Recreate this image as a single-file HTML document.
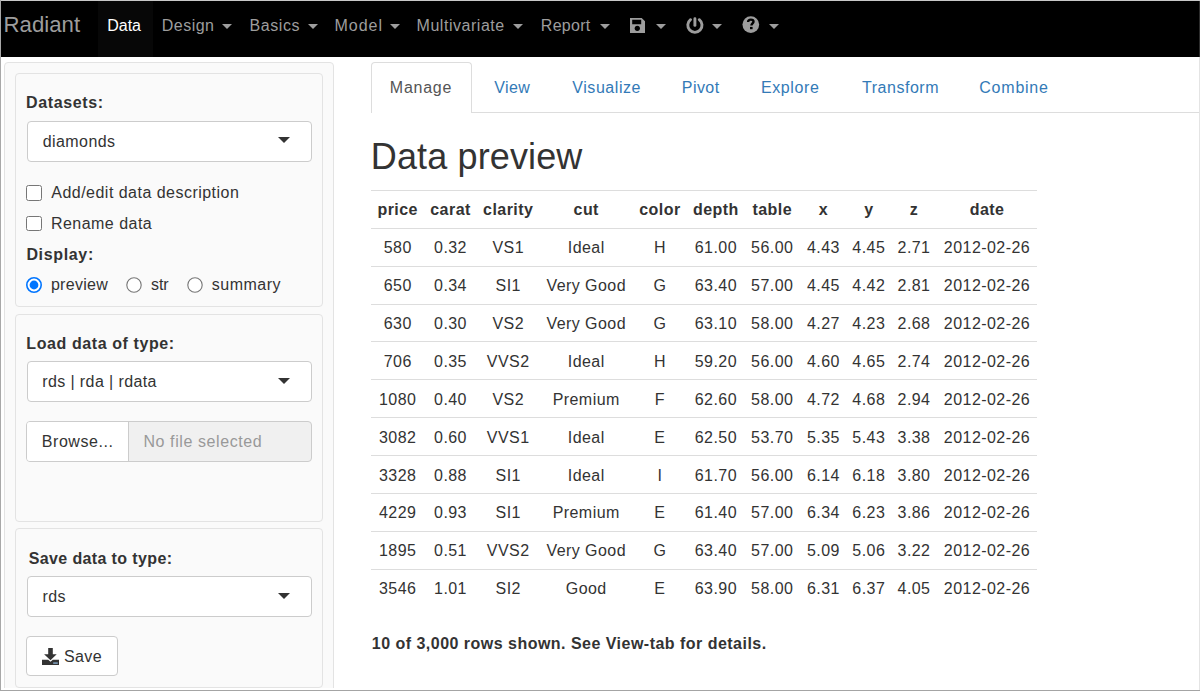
<!DOCTYPE html>
<html><head><meta charset="utf-8">
<style>
html,body{margin:0;padding:0}
body{width:1200px;height:691px;position:relative;overflow:hidden;background:#fff;font-family:"Liberation Sans",sans-serif;color:#333}
.a{position:absolute}
.t{position:absolute;white-space:nowrap;font-size:16px;line-height:20px}
.caret{position:absolute;width:0;height:0;border-top:5px solid #9d9d9d;border-left:5px solid transparent;border-right:5px solid transparent}
.dcaret{position:absolute;width:0;height:0;border-top:6px solid #333;border-left:6px solid transparent;border-right:6px solid transparent}
.sel{position:absolute;left:26.5px;width:283px;height:39px;background:#fff;border:1px solid #ccc;border-radius:4px}
.panel{position:absolute;left:15px;width:306px;background:#fafafa;border:1px solid #e3e3e3;border-radius:4px}
</style></head>
<body>

<div class="a" style="left:1px;top:1px;width:1198px;height:56px;background:#000"></div>
<div class="a" style="left:97.5px;top:1px;width:55.5px;height:56px;background:#070707"></div>
<div class="caret" style="left:221.8px;top:24px"></div>
<div class="caret" style="left:307.5px;top:24px"></div>
<div class="caret" style="left:389.5px;top:24px"></div>
<div class="caret" style="left:512.8px;top:24px"></div>
<div class="caret" style="left:599.8px;top:24px"></div>
<svg class="a" style="left:630.3px;top:17.5px" width="15" height="15" viewBox="0 0 15 15">
<path d="M0 0H11.7L15 3.3V15H0Z M2.2 1.8V6.2H11.2V1.8Z" fill="#9d9d9d" fill-rule="evenodd"/>
<circle cx="7.3" cy="10.3" r="2.6" fill="#000"/>
</svg>
<div class="caret" style="left:655.8px;top:24px"></div>
<svg class="a" style="left:685.5px;top:16.5px" width="18" height="18" viewBox="0 0 18 18">
<path d="M4.53 2.7A7.1 7.1 0 1 0 13.27 2.7" fill="none" stroke="#9d9d9d" stroke-width="2.9" stroke-linecap="round"/>
<path d="M8.9 1.7V8.4" fill="none" stroke="#9d9d9d" stroke-width="2.9" stroke-linecap="round"/>
</svg>
<div class="caret" style="left:711.8px;top:24px"></div>
<svg class="a" style="left:742px;top:16.3px" width="18" height="18" viewBox="0 0 18 18">
<circle cx="8.8" cy="8.6" r="8.35" fill="#9d9d9d"/>
<path d="M6.1 6.0C6.1 4.4 7.3 3.6 8.9 3.6C10.4 3.6 11.5 4.5 11.5 5.7C11.5 7.3 9.4 7.6 9.4 9.6" fill="none" stroke="#000" stroke-width="2.4"/>
<rect x="8.0" y="10.9" width="2.6" height="2.3" fill="#000"/>
</svg>
<div class="caret" style="left:769.4px;top:24px"></div>

<div class="a" style="left:4px;top:62px;width:328px;height:640px;background:#fafafa;border:1px solid #e3e3e3;border-radius:4px"></div>
<div class="panel" style="top:73px;height:231.5px"></div>
<div class="panel" style="top:313.6px;height:206px"></div>
<div class="panel" style="top:528.3px;height:158px"></div>
<div class="a" style="left:1px;top:688px;width:1198px;height:2px;background:#fff"></div>

<div class="sel" style="top:120.6px"></div>
<div class="dcaret" style="left:278.4px;top:137.2px"></div>
<div class="a" style="left:26.2px;top:185px;width:13.5px;height:13.5px;border:1px solid #767676;border-radius:2.5px;background:#fff"></div>
<div class="a" style="left:26.2px;top:215.5px;width:13.5px;height:13.5px;border:1px solid #767676;border-radius:2.5px;background:#fff"></div>
<svg class="a" style="left:26px;top:276.5px" width="16" height="16" viewBox="0 0 16 16"><circle cx="8" cy="8" r="7.2" fill="#fff" stroke="#0075ff" stroke-width="1.6"/><circle cx="8" cy="8" r="4.4" fill="#0075ff"/></svg>
<svg class="a" style="left:126px;top:276.5px" width="16" height="16" viewBox="0 0 16 16"><circle cx="8" cy="8" r="7.2" fill="#fff" stroke="#767676" stroke-width="1.1"/></svg>
<svg class="a" style="left:187px;top:276.5px" width="16" height="16" viewBox="0 0 16 16"><circle cx="8" cy="8" r="7.2" fill="#fff" stroke="#767676" stroke-width="1.1"/></svg>

<div class="sel" style="top:361.4px"></div>
<div class="dcaret" style="left:278.4px;top:378px"></div>
<div class="a" style="left:26.25px;top:421.25px;width:284px;height:38.5px;border:1px solid #ccc;border-radius:4px;background:#f0f0f0;overflow:hidden">
  <div class="a" style="left:0;top:0;width:101px;height:38.5px;background:#fff;border-right:1px solid #ccc"></div>
</div>

<div class="sel" style="top:576.4px"></div>
<div class="dcaret" style="left:278.4px;top:593px"></div>
<div class="a" style="left:26.4px;top:636px;width:90px;height:38.3px;border:1px solid #ccc;border-radius:4px;background:#fff"></div>
<svg class="a" style="left:42px;top:647.7px" width="17" height="17" viewBox="0 0 17 17">
<path d="M6.2 0H10.8V6.3H14.7L8.5 12.2L2.1 6.3H6.2Z" fill="#333"/>
<path d="M0 11.8H6.2L8.5 13.7L10.8 11.8H17V17H0Z" fill="#333"/>
<rect x="11.2" y="14.3" width="4.6" height="1.6" fill="#7c9cb8"/>
</svg>

<div class="a" style="left:471px;top:111.5px;width:728px;height:1px;background:#ddd"></div>
<div class="a" style="left:371px;top:62px;width:99px;height:50px;border:1px solid #ddd;border-bottom:none;border-radius:4px 4px 0 0;background:#fff"></div>

<div class="t" id="radiant" style="left:3.6px;top:13px;font-size:22.2px;line-height:24px;color:#9d9d9d;">Radiant</div>
<div class="t" id="data" style="left:107.2px;top:16px;font-size:16px;line-height:20px;color:#fff;">Data</div>
<div class="t" id="design" style="left:161.8px;top:16px;font-size:16px;line-height:20px;color:#9d9d9d;letter-spacing:0.480px;">Design</div>
<div class="t" id="basics" style="left:249.6px;top:16px;font-size:16px;line-height:20px;color:#9d9d9d;letter-spacing:0.560px;">Basics</div>
<div class="t" id="model" style="left:334.6px;top:16px;font-size:16px;line-height:20px;color:#9d9d9d;letter-spacing:0.950px;">Model</div>
<div class="t" id="multi" style="left:416.6px;top:16px;font-size:16px;line-height:20px;color:#9d9d9d;letter-spacing:0.527px;">Multivariate</div>
<div class="t" id="report" style="left:540.8px;top:16px;font-size:16px;line-height:20px;color:#9d9d9d;letter-spacing:0.280px;">Report</div>
<div class="t" id="manage" style="left:389.8px;top:78px;font-size:16px;line-height:20px;color:#555;letter-spacing:0.760px;">Manage</div>
<div class="t" id="view" style="left:494.3px;top:78px;font-size:16px;line-height:20px;color:#337ab7;letter-spacing:0.333px;">View</div>
<div class="t" id="visualize" style="left:572.3px;top:78px;font-size:16px;line-height:20px;color:#337ab7;letter-spacing:0.550px;">Visualize</div>
<div class="t" id="pivot" style="left:681.8px;top:78px;font-size:16px;line-height:20px;color:#337ab7;letter-spacing:0.450px;">Pivot</div>
<div class="t" id="explore" style="left:761.0px;top:78px;font-size:16px;line-height:20px;color:#337ab7;letter-spacing:0.600px;">Explore</div>
<div class="t" id="transform" style="left:862.0px;top:78px;font-size:16px;line-height:20px;color:#337ab7;letter-spacing:0.525px;">Transform</div>
<div class="t" id="combine" style="left:979.3px;top:78px;font-size:16px;line-height:20px;color:#337ab7;letter-spacing:0.766px;">Combine</div>
<div class="t" id="heading" style="left:370.8px;top:137px;font-size:36px;line-height:40px;color:#333;letter-spacing:0.127px;">Data preview</div>
<div class="t" id="datasets" style="left:26.0px;top:93px;font-size:16px;line-height:20px;color:#333;font-weight:bold;letter-spacing:0.626px;">Datasets:</div>
<div class="t" id="diamonds" style="left:42.7px;top:132px;font-size:16px;line-height:20px;color:#333;letter-spacing:0.429px;">diamonds</div>
<div class="t" id="addedit" style="left:51.3px;top:183px;font-size:16px;line-height:20px;color:#333;letter-spacing:0.475px;">Add/edit data description</div>
<div class="t" id="rename" style="left:50.9px;top:214px;font-size:16px;line-height:20px;color:#333;letter-spacing:0.480px;">Rename data</div>
<div class="t" id="display" style="left:26.4px;top:245px;font-size:16px;line-height:20px;color:#333;font-weight:bold;letter-spacing:0.657px;">Display:</div>
<div class="t" id="preview" style="left:50.9px;top:275px;font-size:16px;line-height:20px;color:#333;letter-spacing:0.300px;">preview</div>
<div class="t" id="str" style="left:150.9px;top:275px;font-size:16px;line-height:20px;color:#333;">str</div>
<div class="t" id="summary" style="left:211.8px;top:275px;font-size:16px;line-height:20px;color:#333;letter-spacing:0.500px;">summary</div>
<div class="t" id="load" style="left:26.3px;top:334px;font-size:16px;line-height:20px;color:#333;font-weight:bold;letter-spacing:0.588px;">Load data of type:</div>
<div class="t" id="rdsopts" style="left:42.2px;top:372px;font-size:16px;line-height:20px;color:#333;letter-spacing:0.399px;">rds | rda | rdata</div>
<div class="t" id="browse" style="left:41.8px;top:432px;font-size:16px;line-height:20px;color:#333;letter-spacing:0.550px;">Browse...</div>
<div class="t" id="nofile" style="left:143.45px;top:432px;font-size:16px;line-height:20px;color:#999;letter-spacing:0.593px;">No file selected</div>
<div class="t" id="savetype" style="left:28.7px;top:549px;font-size:16px;line-height:20px;color:#333;font-weight:bold;letter-spacing:0.377px;">Save data to type:</div>
<div class="t" id="rds" style="left:42.4px;top:587px;font-size:16px;line-height:20px;color:#333;letter-spacing:0.500px;">rds</div>
<div class="t" id="save" style="left:64.0px;top:647px;font-size:16px;line-height:20px;color:#333;letter-spacing:0.400px;">Save</div>
<div class="t" id="footer" style="left:371.8px;top:634px;font-size:16px;line-height:20px;color:#333;font-weight:bold;letter-spacing:0.479px;">10 of 3,000 rows shown. See View-tab for details.</div>
<div class="a" style="left:371px;top:190px;width:666px;height:1px;background:#ddd"></div>
<div class="a" style="left:371px;top:228px;width:666px;height:1px;background:#ddd"></div>
<div class="a" style="left:371px;top:266px;width:666px;height:1px;background:#ddd"></div>
<div class="a" style="left:371px;top:304px;width:666px;height:1px;background:#ddd"></div>
<div class="a" style="left:371px;top:341px;width:666px;height:1px;background:#ddd"></div>
<div class="a" style="left:371px;top:379px;width:666px;height:1px;background:#ddd"></div>
<div class="a" style="left:371px;top:417px;width:666px;height:1px;background:#ddd"></div>
<div class="a" style="left:371px;top:455px;width:666px;height:1px;background:#ddd"></div>
<div class="a" style="left:371px;top:493px;width:666px;height:1px;background:#ddd"></div>
<div class="a" style="left:371px;top:531px;width:666px;height:1px;background:#ddd"></div>
<div class="a" style="left:371px;top:569px;width:666px;height:1px;background:#ddd"></div>
<div class="t" style="left:337.73px;width:120px;text-align:center;top:200px;font-weight:bold;letter-spacing:0.45px">price</div>
<div class="t" style="left:390.53px;width:120px;text-align:center;top:200px;font-weight:bold;letter-spacing:0.45px">carat</div>
<div class="t" style="left:448.23px;width:120px;text-align:center;top:200px;font-weight:bold;letter-spacing:0.45px">clarity</div>
<div class="t" style="left:526.23px;width:120px;text-align:center;top:200px;font-weight:bold;letter-spacing:0.45px">cut</div>
<div class="t" style="left:599.93px;width:120px;text-align:center;top:200px;font-weight:bold;letter-spacing:0.45px">color</div>
<div class="t" style="left:655.93px;width:120px;text-align:center;top:200px;font-weight:bold;letter-spacing:0.45px">depth</div>
<div class="t" style="left:712.23px;width:120px;text-align:center;top:200px;font-weight:bold;letter-spacing:0.45px">table</div>
<div class="t" style="left:763.43px;width:120px;text-align:center;top:200px;font-weight:bold;letter-spacing:0.45px">x</div>
<div class="t" style="left:808.83px;width:120px;text-align:center;top:200px;font-weight:bold;letter-spacing:0.45px">y</div>
<div class="t" style="left:854.02px;width:120px;text-align:center;top:200px;font-weight:bold;letter-spacing:0.45px">z</div>
<div class="t" style="left:927.02px;width:120px;text-align:center;top:200px;font-weight:bold;letter-spacing:0.45px">date</div>
<div class="t" style="left:337.73px;width:120px;text-align:center;top:238px;letter-spacing:0.45px">580</div>
<div class="t" style="left:390.53px;width:120px;text-align:center;top:238px;letter-spacing:0.45px">0.32</div>
<div class="t" style="left:448.23px;width:120px;text-align:center;top:238px;letter-spacing:0.45px">VS1</div>
<div class="t" style="left:526.23px;width:120px;text-align:center;top:238px;letter-spacing:0.45px">Ideal</div>
<div class="t" style="left:599.93px;width:120px;text-align:center;top:238px;letter-spacing:0.45px">H</div>
<div class="t" style="left:655.93px;width:120px;text-align:center;top:238px;letter-spacing:0.45px">61.00</div>
<div class="t" style="left:712.23px;width:120px;text-align:center;top:238px;letter-spacing:0.45px">56.00</div>
<div class="t" style="left:763.43px;width:120px;text-align:center;top:238px;letter-spacing:0.45px">4.43</div>
<div class="t" style="left:808.83px;width:120px;text-align:center;top:238px;letter-spacing:0.45px">4.45</div>
<div class="t" style="left:854.02px;width:120px;text-align:center;top:238px;letter-spacing:0.45px">2.71</div>
<div class="t" style="left:927.02px;width:120px;text-align:center;top:238px;letter-spacing:0.45px">2012-02-26</div>
<div class="t" style="left:337.73px;width:120px;text-align:center;top:276px;letter-spacing:0.45px">650</div>
<div class="t" style="left:390.53px;width:120px;text-align:center;top:276px;letter-spacing:0.45px">0.34</div>
<div class="t" style="left:448.23px;width:120px;text-align:center;top:276px;letter-spacing:0.45px">SI1</div>
<div class="t" style="left:526.23px;width:120px;text-align:center;top:276px;letter-spacing:0.45px">Very Good</div>
<div class="t" style="left:599.93px;width:120px;text-align:center;top:276px;letter-spacing:0.45px">G</div>
<div class="t" style="left:655.93px;width:120px;text-align:center;top:276px;letter-spacing:0.45px">63.40</div>
<div class="t" style="left:712.23px;width:120px;text-align:center;top:276px;letter-spacing:0.45px">57.00</div>
<div class="t" style="left:763.43px;width:120px;text-align:center;top:276px;letter-spacing:0.45px">4.45</div>
<div class="t" style="left:808.83px;width:120px;text-align:center;top:276px;letter-spacing:0.45px">4.42</div>
<div class="t" style="left:854.02px;width:120px;text-align:center;top:276px;letter-spacing:0.45px">2.81</div>
<div class="t" style="left:927.02px;width:120px;text-align:center;top:276px;letter-spacing:0.45px">2012-02-26</div>
<div class="t" style="left:337.73px;width:120px;text-align:center;top:314px;letter-spacing:0.45px">630</div>
<div class="t" style="left:390.53px;width:120px;text-align:center;top:314px;letter-spacing:0.45px">0.30</div>
<div class="t" style="left:448.23px;width:120px;text-align:center;top:314px;letter-spacing:0.45px">VS2</div>
<div class="t" style="left:526.23px;width:120px;text-align:center;top:314px;letter-spacing:0.45px">Very Good</div>
<div class="t" style="left:599.93px;width:120px;text-align:center;top:314px;letter-spacing:0.45px">G</div>
<div class="t" style="left:655.93px;width:120px;text-align:center;top:314px;letter-spacing:0.45px">63.10</div>
<div class="t" style="left:712.23px;width:120px;text-align:center;top:314px;letter-spacing:0.45px">58.00</div>
<div class="t" style="left:763.43px;width:120px;text-align:center;top:314px;letter-spacing:0.45px">4.27</div>
<div class="t" style="left:808.83px;width:120px;text-align:center;top:314px;letter-spacing:0.45px">4.23</div>
<div class="t" style="left:854.02px;width:120px;text-align:center;top:314px;letter-spacing:0.45px">2.68</div>
<div class="t" style="left:927.02px;width:120px;text-align:center;top:314px;letter-spacing:0.45px">2012-02-26</div>
<div class="t" style="left:337.73px;width:120px;text-align:center;top:352px;letter-spacing:0.45px">706</div>
<div class="t" style="left:390.53px;width:120px;text-align:center;top:352px;letter-spacing:0.45px">0.35</div>
<div class="t" style="left:448.23px;width:120px;text-align:center;top:352px;letter-spacing:0.45px">VVS2</div>
<div class="t" style="left:526.23px;width:120px;text-align:center;top:352px;letter-spacing:0.45px">Ideal</div>
<div class="t" style="left:599.93px;width:120px;text-align:center;top:352px;letter-spacing:0.45px">H</div>
<div class="t" style="left:655.93px;width:120px;text-align:center;top:352px;letter-spacing:0.45px">59.20</div>
<div class="t" style="left:712.23px;width:120px;text-align:center;top:352px;letter-spacing:0.45px">56.00</div>
<div class="t" style="left:763.43px;width:120px;text-align:center;top:352px;letter-spacing:0.45px">4.60</div>
<div class="t" style="left:808.83px;width:120px;text-align:center;top:352px;letter-spacing:0.45px">4.65</div>
<div class="t" style="left:854.02px;width:120px;text-align:center;top:352px;letter-spacing:0.45px">2.74</div>
<div class="t" style="left:927.02px;width:120px;text-align:center;top:352px;letter-spacing:0.45px">2012-02-26</div>
<div class="t" style="left:337.73px;width:120px;text-align:center;top:390px;letter-spacing:0.45px">1080</div>
<div class="t" style="left:390.53px;width:120px;text-align:center;top:390px;letter-spacing:0.45px">0.40</div>
<div class="t" style="left:448.23px;width:120px;text-align:center;top:390px;letter-spacing:0.45px">VS2</div>
<div class="t" style="left:526.23px;width:120px;text-align:center;top:390px;letter-spacing:0.45px">Premium</div>
<div class="t" style="left:599.93px;width:120px;text-align:center;top:390px;letter-spacing:0.45px">F</div>
<div class="t" style="left:655.93px;width:120px;text-align:center;top:390px;letter-spacing:0.45px">62.60</div>
<div class="t" style="left:712.23px;width:120px;text-align:center;top:390px;letter-spacing:0.45px">58.00</div>
<div class="t" style="left:763.43px;width:120px;text-align:center;top:390px;letter-spacing:0.45px">4.72</div>
<div class="t" style="left:808.83px;width:120px;text-align:center;top:390px;letter-spacing:0.45px">4.68</div>
<div class="t" style="left:854.02px;width:120px;text-align:center;top:390px;letter-spacing:0.45px">2.94</div>
<div class="t" style="left:927.02px;width:120px;text-align:center;top:390px;letter-spacing:0.45px">2012-02-26</div>
<div class="t" style="left:337.73px;width:120px;text-align:center;top:428px;letter-spacing:0.45px">3082</div>
<div class="t" style="left:390.53px;width:120px;text-align:center;top:428px;letter-spacing:0.45px">0.60</div>
<div class="t" style="left:448.23px;width:120px;text-align:center;top:428px;letter-spacing:0.45px">VVS1</div>
<div class="t" style="left:526.23px;width:120px;text-align:center;top:428px;letter-spacing:0.45px">Ideal</div>
<div class="t" style="left:599.93px;width:120px;text-align:center;top:428px;letter-spacing:0.45px">E</div>
<div class="t" style="left:655.93px;width:120px;text-align:center;top:428px;letter-spacing:0.45px">62.50</div>
<div class="t" style="left:712.23px;width:120px;text-align:center;top:428px;letter-spacing:0.45px">53.70</div>
<div class="t" style="left:763.43px;width:120px;text-align:center;top:428px;letter-spacing:0.45px">5.35</div>
<div class="t" style="left:808.83px;width:120px;text-align:center;top:428px;letter-spacing:0.45px">5.43</div>
<div class="t" style="left:854.02px;width:120px;text-align:center;top:428px;letter-spacing:0.45px">3.38</div>
<div class="t" style="left:927.02px;width:120px;text-align:center;top:428px;letter-spacing:0.45px">2012-02-26</div>
<div class="t" style="left:337.73px;width:120px;text-align:center;top:466px;letter-spacing:0.45px">3328</div>
<div class="t" style="left:390.53px;width:120px;text-align:center;top:466px;letter-spacing:0.45px">0.88</div>
<div class="t" style="left:448.23px;width:120px;text-align:center;top:466px;letter-spacing:0.45px">SI1</div>
<div class="t" style="left:526.23px;width:120px;text-align:center;top:466px;letter-spacing:0.45px">Ideal</div>
<div class="t" style="left:599.93px;width:120px;text-align:center;top:466px;letter-spacing:0.45px">I</div>
<div class="t" style="left:655.93px;width:120px;text-align:center;top:466px;letter-spacing:0.45px">61.70</div>
<div class="t" style="left:712.23px;width:120px;text-align:center;top:466px;letter-spacing:0.45px">56.00</div>
<div class="t" style="left:763.43px;width:120px;text-align:center;top:466px;letter-spacing:0.45px">6.14</div>
<div class="t" style="left:808.83px;width:120px;text-align:center;top:466px;letter-spacing:0.45px">6.18</div>
<div class="t" style="left:854.02px;width:120px;text-align:center;top:466px;letter-spacing:0.45px">3.80</div>
<div class="t" style="left:927.02px;width:120px;text-align:center;top:466px;letter-spacing:0.45px">2012-02-26</div>
<div class="t" style="left:337.73px;width:120px;text-align:center;top:503px;letter-spacing:0.45px">4229</div>
<div class="t" style="left:390.53px;width:120px;text-align:center;top:503px;letter-spacing:0.45px">0.93</div>
<div class="t" style="left:448.23px;width:120px;text-align:center;top:503px;letter-spacing:0.45px">SI1</div>
<div class="t" style="left:526.23px;width:120px;text-align:center;top:503px;letter-spacing:0.45px">Premium</div>
<div class="t" style="left:599.93px;width:120px;text-align:center;top:503px;letter-spacing:0.45px">E</div>
<div class="t" style="left:655.93px;width:120px;text-align:center;top:503px;letter-spacing:0.45px">61.40</div>
<div class="t" style="left:712.23px;width:120px;text-align:center;top:503px;letter-spacing:0.45px">57.00</div>
<div class="t" style="left:763.43px;width:120px;text-align:center;top:503px;letter-spacing:0.45px">6.34</div>
<div class="t" style="left:808.83px;width:120px;text-align:center;top:503px;letter-spacing:0.45px">6.23</div>
<div class="t" style="left:854.02px;width:120px;text-align:center;top:503px;letter-spacing:0.45px">3.86</div>
<div class="t" style="left:927.02px;width:120px;text-align:center;top:503px;letter-spacing:0.45px">2012-02-26</div>
<div class="t" style="left:337.73px;width:120px;text-align:center;top:541px;letter-spacing:0.45px">1895</div>
<div class="t" style="left:390.53px;width:120px;text-align:center;top:541px;letter-spacing:0.45px">0.51</div>
<div class="t" style="left:448.23px;width:120px;text-align:center;top:541px;letter-spacing:0.45px">VVS2</div>
<div class="t" style="left:526.23px;width:120px;text-align:center;top:541px;letter-spacing:0.45px">Very Good</div>
<div class="t" style="left:599.93px;width:120px;text-align:center;top:541px;letter-spacing:0.45px">G</div>
<div class="t" style="left:655.93px;width:120px;text-align:center;top:541px;letter-spacing:0.45px">63.40</div>
<div class="t" style="left:712.23px;width:120px;text-align:center;top:541px;letter-spacing:0.45px">57.00</div>
<div class="t" style="left:763.43px;width:120px;text-align:center;top:541px;letter-spacing:0.45px">5.09</div>
<div class="t" style="left:808.83px;width:120px;text-align:center;top:541px;letter-spacing:0.45px">5.06</div>
<div class="t" style="left:854.02px;width:120px;text-align:center;top:541px;letter-spacing:0.45px">3.22</div>
<div class="t" style="left:927.02px;width:120px;text-align:center;top:541px;letter-spacing:0.45px">2012-02-26</div>
<div class="t" style="left:337.73px;width:120px;text-align:center;top:579px;letter-spacing:0.45px">3546</div>
<div class="t" style="left:390.53px;width:120px;text-align:center;top:579px;letter-spacing:0.45px">1.01</div>
<div class="t" style="left:448.23px;width:120px;text-align:center;top:579px;letter-spacing:0.45px">SI2</div>
<div class="t" style="left:526.23px;width:120px;text-align:center;top:579px;letter-spacing:0.45px">Good</div>
<div class="t" style="left:599.93px;width:120px;text-align:center;top:579px;letter-spacing:0.45px">E</div>
<div class="t" style="left:655.93px;width:120px;text-align:center;top:579px;letter-spacing:0.45px">63.90</div>
<div class="t" style="left:712.23px;width:120px;text-align:center;top:579px;letter-spacing:0.45px">58.00</div>
<div class="t" style="left:763.43px;width:120px;text-align:center;top:579px;letter-spacing:0.45px">6.31</div>
<div class="t" style="left:808.83px;width:120px;text-align:center;top:579px;letter-spacing:0.45px">6.37</div>
<div class="t" style="left:854.02px;width:120px;text-align:center;top:579px;letter-spacing:0.45px">4.05</div>
<div class="t" style="left:927.02px;width:120px;text-align:center;top:579px;letter-spacing:0.45px">2012-02-26</div>
<div class="a" style="left:0;top:0;width:1200px;height:1px;background:#c8c8c8"></div>
<div class="a" style="left:0;top:0;width:1px;height:691px;background:#a8a8a8"></div>
<div class="a" style="left:0;top:690px;width:1200px;height:1px;background:#a4a4a4"></div>
<div class="a" style="left:1199px;top:1px;width:1px;height:56px;background:#2c2c2c"></div>
<div class="a" style="left:1199px;top:57px;width:1px;height:633px;background:#e4e4e4"></div>

</body></html>
